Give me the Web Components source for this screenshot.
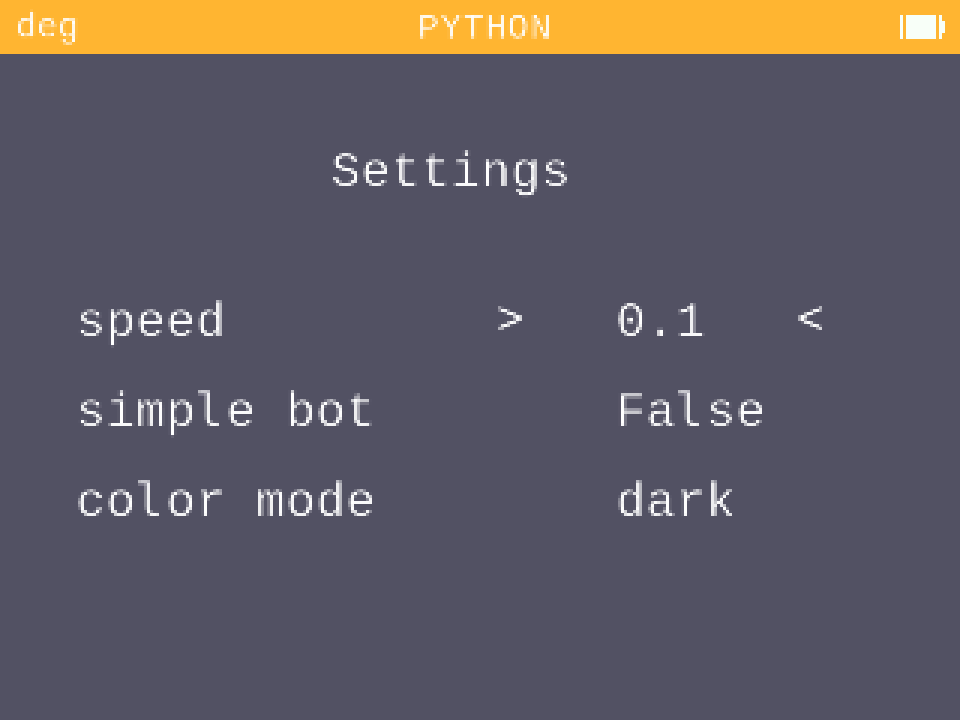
<!DOCTYPE html>
<html lang="en">
<head>
<meta charset="utf-8">
<title>Settings</title>
<style>
html, body { margin: 0; background: #525163; }
</style>
</head>
<body>
<calc-screen>
  <title-bar slot="bar" unit="deg" name="PYTHON"></title-bar>
  <settings-list heading="Settings">
    <setting-row label="speed" value="0.1" selected></setting-row>
    <setting-row label="simple bot" value="False"></setting-row>
    <setting-row label="color mode" value="dark"></setting-row>
  </settings-list>
</calc-screen>
<script>
class Base extends HTMLElement {
  connectedCallback() {
    if (!this.shadowRoot) this.attachShadow({ mode: 'open' }).innerHTML = this.view();
  }
  attr(n) { return this.getAttribute(n) || ''; }
}
// The DejaVu "l" has a single curled foot, unlike the Liberation one.
const glyphs = t => t.replace(/l/g, '<span class="l">l</span>');

customElements.define('calc-screen', class extends Base {
  view() { return `<style>
    :host { display: flex; flex-direction: column; width: 960px; height: 720px; overflow: hidden;
      background: #525163; color: #fff; font-family: "Liberation Mono", monospace; font-size: 49px; letter-spacing: .6px; }
    svg { position: absolute; width: 0; height: 0; }
    main { flex: 1; display: flex; flex-direction: column; width: 960px; background: #525163; filter: url(#lcd); }
    </style>
    <svg aria-hidden="true"><filter id="lcd" filterUnits="userSpaceOnUse" primitiveUnits="userSpaceOnUse"
      x="0" y="0" width="960" height="720" color-interpolation-filters="sRGB">
      <feConvolveMatrix in="SourceGraphic" order="3" kernelMatrix="0 2 0 2 8 2 0 2 0" divisor="16" edgeMode="duplicate" result="mean"/>
      <feFlood x="1" y="1" width="1" height="1" flood-color="#fff"/>
      <feOffset x="0" y="0" width="3" height="3" dx="0" dy="0"/>
      <feTile x="0" y="0" width="960" height="720" result="grid"/>
      <feComposite in="mean" in2="grid" operator="in"/>
      <feMorphology operator="dilate" radius="1"/>
    </filter></svg>
    <main><slot name="bar"></slot><slot></slot></main>`; }
});

customElements.define('battery-icon', class extends Base {
  view() { return `<style>:host { display: block; width: 45px; height: 24px; } svg { display: block; }</style>
    <svg width="45" height="24" fill="#f8fff8" shape-rendering="crispEdges"><path d="M0 0h3v24H0zM6 0h30v24H6zM39 0h3v6h3v12h-3v6h-3z"/></svg>`; }
});

customElements.define('title-bar', class extends Base {
  view() { return `<style>
    :host { display: grid; grid-template-columns: 402px 1fr 45px; box-sizing: border-box; height: 54px;
      padding: 0 15px 0 16px; background: #ffb531; font-size: 35px; letter-spacing: 0; line-height: 56px; }
    span { white-space: pre; -webkit-text-stroke: .4px #ffb531; }
    .name { letter-spacing: 1.4px; line-height: 58px; }
    battery-icon { margin-top: 15px; margin-right: 0; justify-self: end; }
    </style><span>${this.attr('unit')}</span><span class="name">${this.attr('name')}</span><battery-icon></battery-icon>`; }
});

customElements.define('settings-list', class extends Base {
  view() { return `<style>
    :host { display: flex; flex-direction: column; padding: 74px 0 0 1px; line-height: 90px; -webkit-text-stroke: .6px #525163; }
    h1 { margin: 0 0 60px; padding-left: 330px; font: inherit; }
    </style><h1>${this.attr('heading')}</h1><slot></slot>`; }
});

customElements.define('setting-row', class extends Base {
  view() {
    const on = this.hasAttribute('selected');
    return `<style>
    :host { display: grid; grid-template-columns: 420px 120px 180px 30px; padding-left: 75px; height: 90px; }
    span { white-space: pre; }
    .l { font-family: "DejaVu Sans Mono"; font-size: 47px; letter-spacing: 1.7px; line-height: 0; position: relative; left: -1px; }
    .mark { font-size: 44px; line-height: 86px; padding-left: 1px; -webkit-text-stroke-width: 0; }
    </style><span>${glyphs(this.attr('label'))}</span><span class="mark">${on ? '&gt;' : ''}</span><span>${glyphs(this.attr('value'))}</span><span class="mark">${on ? '&lt;' : ''}</span>`;
  }
});
</script>
</body>
</html>
